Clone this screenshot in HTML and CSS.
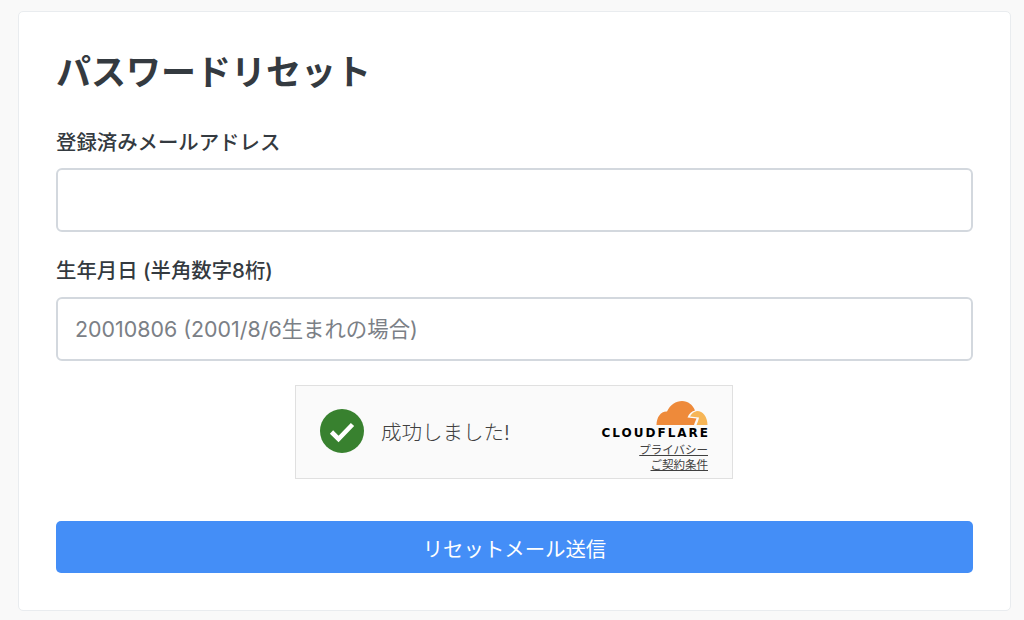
FILE: index.html
```html
<!DOCTYPE html>
<html lang="ja">
<head>
    <meta charset="UTF-8">
    <title>パスワードリセット</title>
    <link rel="stylesheet" href="styles.css">
</head>
<body>
    <form class="card">
        <h1 class="card-title">パスワードリセット</h1>

        <label class="field-label" for="email">登録済みメールアドレス</label>
        <input class="field-input" id="email" type="text">

        <label class="field-label field-label-second" for="birthday">生年月日 (半角数字8桁)</label>
        <input class="field-input" id="birthday" type="text" placeholder="20010806 (2001/8/6生まれの場合)">

        <div class="captcha">
            <div class="captcha-status">
                <svg class="captcha-check" viewBox="0 0 44 44" width="44" height="44">
                    <circle cx="22" cy="22" r="22" fill="#38812f"/>
                    <path d="M11.5 23 L18.500 30 L32.500 15.500" fill="none" stroke="#fff" stroke-width="4.600"/>
                </svg>
                <span class="captcha-text">成功しました!</span>
            </div>
            <div class="captcha-brand">
                <svg class="cf-cloud" viewBox="0 0 52 24" width="52" height="24">
                    <path d="M.5 24C.5 16 5 10 11 10.500C14 4 20 0 26 0C32 0 37 4 39 9.500C36 10 33 12.500 31.500 16.500L40.500 17.500C39.500 20 38.500 22 38 24Z" fill="#ee8a3a"/>
                    <path d="M41 10C47 10 51.500 16 51.500 24L40.500 24C41.500 22 42.500 19 43 16.500L34 15.500C35.500 12.500 38 10.500 41 10Z" fill="#f6b556"/>
                </svg>
                <div class="cf-wordmark">CLOUDFLARE</div>
                <a class="cf-link">プライバシー</a>
                <a class="cf-link">ご契約条件</a>
            </div>
        </div>

        <button class="submit-button" type="button">リセットメール送信</button>
    </form>
</body>
</html>
```

FILE: styles.css
```css
* {
    box-sizing: border-box;
}

body {
    margin: 0;
    padding: 11px 13px 9px 18px;
    background: #f9f9f9;
    color: #343a40;
    font-family: Inter, "Noto Sans CJK JP", sans-serif;
}

.card {
    display: flex;
    flex-direction: column;
    height: 600px;
    padding: 35px 37px 37px;
    background: #fff;
    border: 1px solid #e9ecef;
    border-radius: 5px;
}

.card > * {
    flex-shrink: 0;
}

.card-title {
    margin: 0 0 32px;
    font-size: 35px;
    line-height: 50px;
    font-weight: 700;
}

.field-label {
    margin-bottom: 11px;
    font-size: 20.400px;
    line-height: 28px;
    font-weight: 500;
}

.field-label-second {
    margin-top: 25px;
    margin-bottom: 12px;
}

.field-input {
    width: 100%;
    height: 64px;
    padding: 0 17px;
    border: 2px solid #d3d8de;
    border-radius: 6px;
    background: #fff;
    font-family: inherit;
    font-size: 21.400px;
}

.field-input::placeholder {
    color: #7b8086;
    opacity: 1;
}

.captcha {
    display: flex;
    align-items: center;
    justify-content: space-between;
    align-self: center;
    width: 438px;
    height: 94px;
    margin: 24px 1px 0 0;
    padding: 0 24px;
    background: #fafafa;
    border: 1px solid #e0e0e0;
}

.captcha-status {
    display: flex;
    align-items: center;
    gap: 17px;
    padding-bottom: 2px;
}

.captcha-text {
    font-size: 20.500px;
    font-weight: 300;
    color: #404040;
}

.captcha-brand {
    display: flex;
    flex-direction: column;
    align-items: flex-end;
    padding-top: 9px;
}

.cf-wordmark {
    margin: 1px -2px 3px 0;
    font-family: "DejaVu Sans", sans-serif;
    font-size: 12px;
    line-height: 14px;
    font-weight: 700;
    letter-spacing: 2px;
    color: #000;
}

.cf-link {
    font-size: 11.500px;
    line-height: 15px;
    color: #404040;
    text-decoration: underline;
}

.submit-button {
    width: 100%;
    height: 52px;
    margin-top: 42px;
    padding-top: 2px;
    border: none;
    border-radius: 5px;
    background: #448ef7;
    color: #fff;
    font-family: inherit;
    font-size: 20.400px;
}
```
